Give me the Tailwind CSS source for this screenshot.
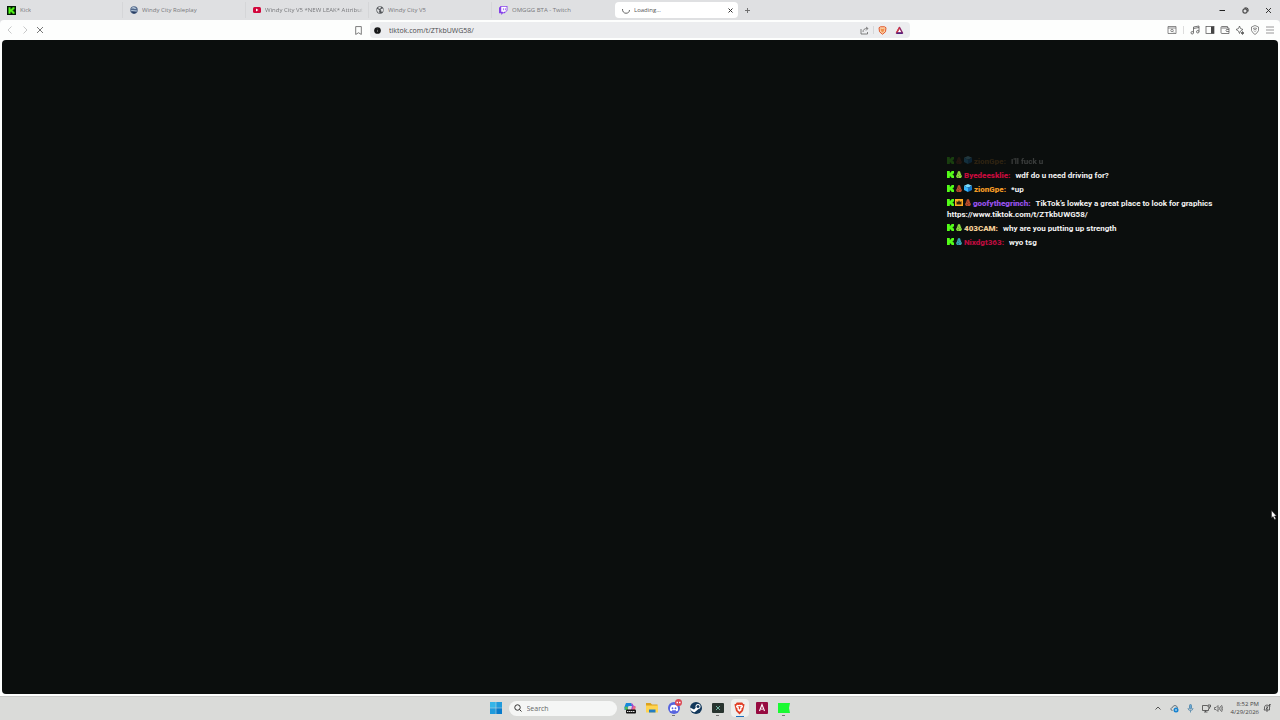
<!DOCTYPE html>
<html lang="en">
<head>
  <meta charset="UTF-8">
  <meta name="viewport" content="width=device-width, initial-scale=1.0">
  <title>Loading...</title>
  <script src="https://cdn.jsdelivr.net/npm/@tailwindcss/browser@4"></script>
</head>
<body class="h-screen flex flex-col overflow-hidden bg-[#dfe0e2] font-['Open_Sans',sans-serif] text-[#5f6062]">

  <!-- Shared icons -->
  <svg class="hidden" xmlns="http://www.w3.org/2000/svg">
    <symbol id="kick" viewBox="0 0 9 10" preserveAspectRatio="none"><path fill="#53fc18" d="M0 0h3.600v2.500h1V1.300h1V0H9v3.600H8v1H7v.8h1v1h1V10H5.600V8.700h-1V7.500h-1V10H0z"/></symbol>
    <symbol id="sub" viewBox="0 0 8 10"><path d="M3 0h2v1h1v2.500h1V6h1v3H7v1H1V9H0V6h1V3.500h1V1h1z"/><path fill="#0b0e0d" fill-opacity=".6" d="M3 4h1v1H3zM5 6h1v1H5zM2 8h2v1H2z"/></symbol>
    <symbol id="cube" viewBox="0 0 10 10"><path fill="#7bdcff" d="M5 0l5 2.300L5 4.600 0 2.300z"/><path fill="#35b4fa" d="M0 2.300L5 4.600V10L0 7.600z"/><path fill="#1477c9" d="M10 2.300L5 4.600V10l5-2.400z"/></symbol>
    <symbol id="brave" viewBox="0 0 12 14"><path fill="#e03d24" d="M3 .5h6L10.200 2l1.300.3-.4 2.200-1.300 5.200L6 13.500 2.200 9.700.9 4.500.5 2.300 1.800 2z"/><path fill="#fff" d="M3.200 3l1.500.3L6 3l1.300.3L8.800 3l1.200 2-2 2.300.3 1.200L6 10.500 3.700 8.500 4 7.300 2 5z"/><path fill="#e03d24" d="M3.600 5l1.700.5v2L6 8l.7-.5v-2L8.400 5 6.500 4.500h-1z"/></symbol>
  </svg>

  <!-- Tabs -->
  <header class="h-5 shrink-0 flex items-center text-[6px] text-[#77787b]">
    <nav class="grid w-[738px] shrink-0 grid-cols-6 items-center">
      <a href="#" class="min-w-0 h-4 flex items-center gap-1 pl-[7px] pr-3 border-r border-[#d5d6d8]">
        <svg class="size-[9px] shrink-0" viewBox="0 0 9 9"><path fill="#06180a" d="M0 0h9v9H0z"/><path fill="#53fc18" d="M1.500 1.200h2v2h1v-1h1v-1h2v2h-1v1h-1v.6h1v1h1v2h-2v-1h-1v-1h-1v2h-2z"/></svg>
        <span class="truncate">Kick</span>
      </a>
      <a href="#" class="min-w-0 h-4 flex items-center gap-1 pl-[7px] pr-3 border-r border-[#d5d6d8]">
        <svg class="size-[8px] shrink-0" viewBox="0 0 16 16"><circle cx="8" cy="8" r="7.500" fill="#52688b"/><path fill="#b9cbdc" d="M2 5l4-3 4 1 3 2-3 1-3-1zM2 8l12 1-1 2-10-1z"/><path fill="#293e62" d="M3 11l10 1-3 3H6z"/></svg>
        <span class="truncate">Windy City Roleplay</span>
      </a>
      <a href="#" class="min-w-0 h-4 flex items-center gap-1 pl-[7px] border-r border-[#d5d6d8]">
        <svg class="w-[8px] h-[6px] shrink-0" viewBox="0 0 16 12"><rect width="16" height="12" rx="3" fill="#d2073c"/><path fill="#fff" d="M6 3l5 3-5 3z"/></svg>
        <span class="whitespace-nowrap mask-r-from-95%">Windy City V5 *NEW LEAK* Attribut</span>
      </a>
      <a href="#" class="min-w-0 h-4 flex items-center gap-1 pl-[7px] pr-3 border-r border-[#d5d6d8]">
        <svg class="size-[8px] shrink-0" viewBox="0 0 16 16"><circle cx="8" cy="8" r="7.300" fill="#55585c"/><path fill="#dfe0e2" d="M2 6l3 1 2 2-1 2 1 3-3-1-2-4zM6 2l3-.5 1 2-2 2H6L4 4zM10 6l4-1 .5 4-2 3-2-1V9L9 8z"/></svg>
        <span class="truncate">Windy City V5</span>
      </a>
      <a href="#" class="min-w-0 h-4 flex items-center gap-1 pl-[7px] pr-3">
        <svg class="size-[9px] shrink-0" viewBox="0 0 16 16"><path fill="#8540e8" d="M3 0L0 3v10h4v3l3-3h3l5-5V0z"/><path fill="#fff" d="M4 1.500h9.500V7.500l-2 2.500H9l-2 2v-2H4z"/><path fill="#8540e8" d="M7 4h1.300v3.500H7zm3.500 0h1.300v3.500h-1.300z"/></svg>
        <span class="truncate">OMGGG BTA - Twitch</span>
      </a>
      <div class="min-w-0 h-4 flex items-center gap-1 pl-[7px] pr-1 rounded-sm bg-white text-[#555]">
        <svg class="size-[8px] shrink-0" viewBox="0 0 16 16" fill="none" stroke="#555" stroke-width="1.800"><path d="M1 6c-.5 5 3 8.500 7 8.500S15 12 15 8"/></svg>
        <span class="flex-1 truncate">Loading...</span>
        <button aria-label="Close tab" class="size-[8px] flex items-center justify-center"><svg class="size-[5px]" viewBox="0 0 10 10" stroke="#333" stroke-width="2"><path d="M1 1l8 8M9 1L1 9"/></svg></button>
      </div>
    </nav>
    <button aria-label="New tab" class="ml-[6px] p-px"><svg class="size-[5px]" viewBox="0 0 10 10" stroke="#666" stroke-width="1.800"><path d="M5 0v10M0 5h10"/></svg></button>
    <div class="ml-auto flex items-center gap-4 pr-2">
      <button aria-label="Minimize"><svg class="size-[7px]" viewBox="0 0 14 14" stroke="#222" stroke-width="2"><path d="M1 7h11"/></svg></button>
      <button aria-label="Restore"><svg class="size-[7px]" viewBox="0 0 14 14" fill="none" stroke="#222" stroke-width="2"><rect x="2" y="4" width="8" height="8" rx="2"/><path d="M5 2h4q3 0 3 3v4"/></svg></button>
      <button aria-label="Close"><svg class="size-[7px]" viewBox="0 0 14 14" stroke="#222" stroke-width="1.800"><path d="M2 2l10 10M12 2L2 12"/></svg></button>
    </div>
  </header>

  <!-- Toolbar -->
  <div class="h-5 shrink-0 grid grid-cols-[1fr_540px_1fr] items-center rounded-t bg-[#fdfefd]">
    <div class="flex items-center pl-[6px] pr-[7px]">
      <button disabled aria-label="Back" class="w-[15px]"><svg class="size-[8px]" viewBox="0 0 16 16" fill="none" stroke="#b4b5b6" stroke-width="1.500"><path d="M11 1L4 8l7 7"/></svg></button>
      <button disabled aria-label="Forward" class="w-[15px]"><svg class="size-[8px]" viewBox="0 0 16 16" fill="none" stroke="#b4b5b6" stroke-width="1.500"><path d="M5 1l7 7-7 7"/></svg></button>
      <button aria-label="Stop"><svg class="size-[8px]" viewBox="0 0 16 16" stroke="#555" stroke-width="1.600"><path d="M2 2l12 12M14 2L2 14"/></svg></button>
      <button aria-label="Bookmark" class="ml-auto"><svg class="size-[9px]" viewBox="0 0 16 16" fill="none" stroke="#666" stroke-width="1.500"><path d="M3 1h10v14l-5-3-5 3z"/></svg></button>
    </div>
    <div class="h-4 flex items-center rounded-sm bg-[#ecedef] pl-1 pr-[6px]">
      <svg class="size-[7px] shrink-0" viewBox="0 0 14 14"><circle cx="7" cy="7" r="6.700" fill="#171819"/><path d="M7 6v4M7 3.500v1" stroke="#999" stroke-width="1.200"/></svg>
      <input aria-label="Address" value="tiktok.com/t/ZTkbUWG58/" class="ml-2 flex-1 min-w-0 h-3 bg-transparent text-[7px] text-[#4a4b4d] outline-none">
      <button aria-label="Share"><svg class="size-[9px]" viewBox="0 0 18 18" fill="none" stroke="#666" stroke-width="1.600"><path d="M2 6v10h13v-4M6 12c0-5 3-7 9-7M12 2l4 3-4 4"/></svg></button>
      <span class="mx-1 h-2 w-px bg-[#d6d7d9]"></span>
      <button aria-label="Shields"><svg class="size-[9px]" viewBox="0 0 18 18" fill="#fbd1a6" stroke="#e1582c" stroke-width="2"><path d="M5 1.500h8l3 2-1 8-6 5-6-5-1-8z"/><path fill="#f0914f" stroke="none" d="M5 5l4 1 4-1-1 5-3 3-3-3z"/></svg></button>
      <button aria-label="Rewards" class="ml-2"><svg class="size-[9px]" viewBox="0 0 18 18" stroke-linejoin="round"><path fill="#fff" stroke="#8b2466" stroke-width="3" d="M9 3l6 11H3z"/><path stroke="#d93a45" stroke-width="3" d="M9 3L3 14"/><path stroke="#53217d" stroke-width="3" d="M3 14.500h12"/></svg></button>
    </div>
    <div class="flex items-center justify-end gap-[5px] pr-[5px]">
      <button aria-label="Search tabs"><svg class="size-[10px]" viewBox="0 0 20 20" fill="none" stroke="#666" stroke-width="1.500"><path d="M2 3h16v14H2zM2 6h16"/><circle cx="10" cy="11" r="2.500"/><path d="M12 13l2 2"/></svg></button>
      <span class="mx-[1px] h-2 w-px bg-[#ddd]"></span>
      <button aria-label="Media"><svg class="size-[10px]" viewBox="0 0 20 20" fill="none" stroke="#555" stroke-width="1.600"><path d="M7 15V4l11-2v11M7 7l11-2"/><circle cx="4.500" cy="15.500" r="2.500"/><circle cx="15.500" cy="13.500" r="2.500"/></svg></button>
      <button aria-label="Sidebar"><svg class="size-[10px]" viewBox="0 0 20 20"><rect x="2" y="3" width="16" height="14" fill="none" stroke="#555" stroke-width="1.500"/><path fill="#444" d="M12 3h6v14h-6z"/></svg></button>
      <button aria-label="Wallet"><svg class="size-[10px]" viewBox="0 0 20 20" fill="none" stroke="#555" stroke-width="1.500"><path d="M15 6V3H4Q2 3 2 5v10q0 2 2 2h14V6H3M18 9h-5q-2 2 0 4h5"/></svg></button>
      <button aria-label="Leo"><svg class="size-[10px]" viewBox="0 0 20 20" fill="none" stroke="#555" stroke-width="1.500"><path d="M9 2l2 5 5 2-5 3-2 5-2-5-5-3 5-2z"/><path fill="#555" d="M15 13l1 2 2 1-2 1-1 2-1-2-2-1 2-1z"/></svg></button>
      <button aria-label="VPN"><svg class="size-[10px]" viewBox="0 0 20 20" fill="none" stroke="#666" stroke-width="1.500"><path d="M10 1l7 3v7q-2 5-7 8-5-3-7-8V4z"/><path d="M6 7q4-2 8 0M7 10q3-2 6 0M9 13h2"/></svg></button>
      <button aria-label="Menu"><svg class="size-[10px]" viewBox="0 0 20 20" stroke="#777" stroke-width="1.500"><path d="M2 4h16M2 10h16M2 16h16"/></svg></button>
    </div>
  </div>

  <!-- Page -->
  <main class="relative flex-1 min-h-0 bg-[#fdfefd] px-[2px] pb-[2px]">
    <div class="h-full rounded-sm bg-[#0b0e0d]"></div>

    <!-- Chat overlay -->
    <ul class="absolute top-[116px] right-[53px] w-[280px] flex flex-col gap-[3px] font-[Roboto,sans-serif] text-[8px] leading-[11px] font-bold text-[#f4f4f4]">
      <li class="opacity-20">
        <svg class="inline align-baseline w-[7px] h-[7px]"><use href="#kick"/></svg>
        <svg class="inline align-baseline w-[6px] h-[7px] fill-[#8a3620]"><use href="#sub"/></svg>
        <svg class="inline align-baseline size-[8px]"><use href="#cube"/></svg>
        <b class="mr-[3px] text-[#b07020]">zionGpe:</b> I'll fuck u
      </li>
      <li>
        <svg class="inline align-baseline w-[7px] h-[7px]"><use href="#kick"/></svg>
        <svg class="inline align-baseline w-[6px] h-[7px] fill-[#8ade3c]"><use href="#sub"/></svg>
        <b class="mr-[3px] text-[#c40b3d]">Byedeesklie:</b> wdf do u need driving for?
      </li>
      <li>
        <svg class="inline align-baseline w-[7px] h-[7px]"><use href="#kick"/></svg>
        <svg class="inline align-baseline w-[6px] h-[7px] fill-[#b94c2b]"><use href="#sub"/></svg>
        <svg class="inline align-baseline size-[8px]"><use href="#cube"/></svg>
        <b class="mr-[3px] text-[#f09a25]">zionGpe:</b> *up
      </li>
      <li>
        <svg class="inline align-baseline w-[7px] h-[7px]"><use href="#kick"/></svg><svg class="inline align-baseline ml-px w-[8px] h-[7px]" viewBox="0 0 16 14"><path fill="#ffac24" d="M0 0h16v14H0z"/><path fill="#332108" d="M3 4l3 2 2-4 2 4 3-2v7H3z"/></svg>
        <svg class="inline align-baseline w-[6px] h-[7px] fill-[#b94c2b]"><use href="#sub"/></svg>
        <b class="mr-[3px] text-[#9550e8]">goofythegrinch:</b> TikTok’s lowkey a great place to look for graphics https://www.tiktok.com/t/ZTkbUWG58/
      </li>
      <li>
        <svg class="inline align-baseline w-[7px] h-[7px]"><use href="#kick"/></svg>
        <svg class="inline align-baseline w-[6px] h-[7px] fill-[#8ade3c]"><use href="#sub"/></svg>
        <b class="mr-[3px] text-[#f3cf98]">403CAM:</b> why are you putting up strength
      </li>
      <li>
        <svg class="inline align-baseline w-[7px] h-[7px]"><use href="#kick"/></svg>
        <svg class="inline align-baseline w-[6px] h-[7px] fill-[#37a6b8]"><use href="#sub"/></svg>
        <b class="mr-[3px] text-[#b80c3d]">Nixdgt363:</b> wyo tsg
      </li>
    </ul>

    <!-- Cursor -->
    <svg class="absolute top-[470px] right-[3px] w-[6px] h-[10px]" viewBox="0 0 12 20"><path fill="#fff" stroke="#222" d="M1 1v15l3-3 3 6 3-1-3-6h4z"/></svg>
  </main>

  <!-- Taskbar -->
  <footer class="h-6 shrink-0 grid grid-cols-[1fr_auto_1fr] items-center bg-[#dadbd9] inset-shadow-[0_1px_0_#c9cac8]">
    <div></div>
    <div class="flex items-center pl-[4px]">
      <button aria-label="Start" class="w-[13px] mr-[6px]"><svg class="size-[12px]" viewBox="0 0 24 24"><path fill="#35b5e8" d="M0 0h11.500v11.500H0z"/><path fill="#209bdc" d="M12.500 0H24v11.500H12.500zM0 12.500h11.500V24H0z"/><path fill="#087bcb" d="M12.500 12.500H24V24H12.500z"/></svg></button>
      <label class="flex h-[15px] w-[108px] items-center rounded-full bg-[#f5f6f5] pl-[5px]">
        <svg class="size-[8px] shrink-0" viewBox="0 0 16 16" fill="none" stroke="#333" stroke-width="2"><circle cx="7" cy="7" r="5.500"/><path d="M11 11l4 4"/></svg>
        <input aria-label="Search" placeholder="Search" class="ml-[5px] w-[80px] h-3 bg-transparent text-[7px] placeholder:text-[#666] outline-none">
      </label>
      <div class="ml-[2px] flex">
        <button aria-label="Copilot" class="w-[22px] h-5 flex items-center justify-center"><svg class="size-[12px]" viewBox="0 0 24 24"><path fill="#1688dc" d="M4 2h10l3 6H9L6 16H1Q0 9 4 2z"/><path fill="#55bd55" d="M1 10l6-1 1 7H3z"/><path fill="#a346d1" d="M14 2q4 0 5 5l4 2-2 7h-7l2-8z"/><path fill="#ed6a82" d="M19 8q5 0 4 4l-2 5h-6z"/><rect x="4" y="15" width="20" height="8" rx="2" fill="#111"/><path stroke="#ddd" stroke-width="2" stroke-dasharray="3 1" d="M6 19h16"/></svg></button>
        <button aria-label="File Explorer" class="w-[22px] h-5 flex items-center justify-center"><svg class="size-[12px]" viewBox="0 0 24 24"><path fill="#dca11d" d="M0 2h9l3 3h11v8H0z"/><path fill="#ffd451" d="M0 7h24v14H0z"/><path fill="#227cc2" d="M6 15h13v6H6z"/></svg></button>
        <button aria-label="Discord" class="relative w-[22px] h-5 flex items-center justify-center">
          <svg class="size-[12px]" viewBox="0 0 24 24"><circle cx="12" cy="12" r="12" fill="#5764df"/><path fill="#fff" d="M6 7q6-3 12 0 3 5 2 10-3 2-4 1l-1-2q-3 1-6 0l-1 2q-1 1-4-1-1-5 2-10z"/><circle cx="9" cy="12.500" r="1.800" fill="#5764df"/><circle cx="15" cy="12.500" r="1.800" fill="#5764df"/></svg>
          <svg class="absolute top-[1px] right-[3px] size-[7px]" viewBox="0 0 14 14"><circle cx="7" cy="7" r="7" fill="#db4854"/><path d="M3 7h3M8 7h3" stroke="#fff" stroke-width="3"/></svg>
          <span class="absolute bottom-[2px] w-[3px] h-px bg-[#777]"></span>
        </button>
        <button aria-label="Steam" class="w-[22px] h-5 flex items-center justify-center"><svg class="size-[12px]" viewBox="0 0 24 24"><circle cx="12" cy="12" r="12" fill="#12385b"/><path fill="#fff" d="M0 11l8 4 5-5 4 4-6 5q-2 3-6 0l-4-3z"/><circle cx="16" cy="9" r="5" fill="#fff"/><circle cx="16" cy="9" r="3" fill="#12385b"/></svg></button>
        <button aria-label="Capture" class="relative w-[22px] h-5 flex items-center justify-center"><svg class="w-[12px] h-[10px]" viewBox="0 0 24 20"><rect width="24" height="20" rx="2" fill="#28342f"/><path d="M8 6l8 8M16 6l-8 8" stroke="#70b4a2" stroke-width="2"/></svg><span class="absolute bottom-[2px] w-[3px] h-px bg-[#777]"></span></button>
        <button aria-label="Brave" class="relative w-[22px] h-5 flex items-center justify-center"><span class="absolute inset-x-[2px] inset-y-px rounded-sm bg-[#eeefed]"></span><svg class="relative w-[11px] h-[13px]"><use href="#brave"/></svg><span class="absolute bottom-px w-[8px] h-px bg-[#1d70bd]"></span></button>
        <button aria-label="Launcher" class="w-[22px] h-5 flex items-center justify-center"><svg class="size-[12px]" viewBox="0 0 24 24"><rect width="24" height="24" rx="2" fill="#960b40"/><path d="M7 18l5-13 5 13M12 13v3" fill="none" stroke="#fff" stroke-width="2.200"/></svg></button>
        <button aria-label="Overlay" class="relative w-[22px] h-5 flex items-center justify-center"><svg class="w-[12px] h-[11px]" viewBox="0 0 24 22"><path fill="#19fa32" d="M0 0h24l-2 10 2 10H0z"/></svg><span class="absolute bottom-[2px] w-[3px] h-px bg-[#777]"></span></button>
      </div>
    </div>
    <div class="flex items-center justify-end pr-[9px]">
      <button aria-label="Show hidden icons" class="mr-[9px]"><svg class="size-[6px]" viewBox="0 0 12 12" fill="none" stroke="#444" stroke-width="1.800"><path d="M1 9l5-5 5 5"/></svg></button>
      <button aria-label="OneDrive" class="mr-[8px]"><svg class="size-[9px]" viewBox="0 0 18 18"><path fill="none" stroke="#65747e" stroke-width="2" d="M5 13Q1 13 2 9q1-2 3-2 1-4 5-4t5 5"/><circle cx="12" cy="12" r="5" fill="#1683cf"/><path fill="none" stroke="#fff" d="M10 12h4M12 10v4"/></svg></button>
      <button aria-label="Microphone" class="mr-[8px]"><svg class="w-[7px] h-[9px]" viewBox="0 0 14 18" fill="none" stroke="#5689ac" stroke-width="1.800"><rect x="5" y="1" width="4" height="9" rx="2" fill="#68a9d6"/><path d="M2 8q0 5 5 5t5-5M7 13v4"/></svg></button>
      <button aria-label="Network" class="mr-[3px]"><svg class="size-[9px]" viewBox="0 0 18 18" fill="none" stroke="#444" stroke-width="1.600"><path d="M11 3H1v10h12V9M4 16h7M7 13v3"/><path d="M12 2h5v4h-5zM14.500 6v4"/></svg></button>
      <button aria-label="Volume"><svg class="size-[9px]" viewBox="0 0 18 18" fill="none" stroke="#555" stroke-width="1.500"><path d="M1 7h3l4-4v12l-4-4H1zM10 6q2 3 0 6M13 4q3 5 0 10M15 2q5 7 0 14"/></svg></button>
      <button class="ml-[8px] text-right text-[6px] leading-[8px] text-[#444]">8:52 PM<br>4/29/2026</button>
      <button aria-label="Notifications" class="ml-1"><svg class="size-[8px]" viewBox="0 0 16 16" fill="none" stroke="#444" stroke-width="1.600"><path d="M2 12h11V6q-1-4-5-4T3 6v4zM6 14h4M6 6h4L6 10h4M12 1h3l-3 3h3"/></svg></button>
    </div>
  </footer>

</body>
</html>
